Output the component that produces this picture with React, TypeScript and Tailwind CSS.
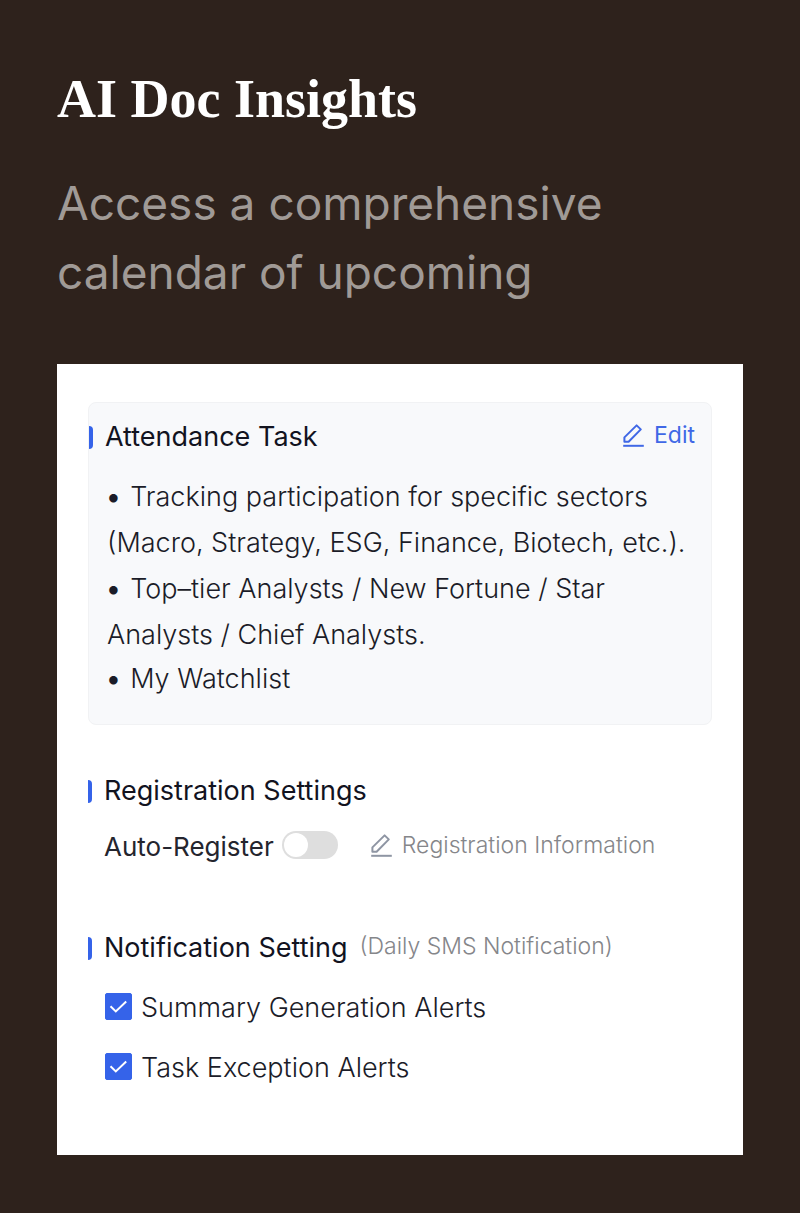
import { useId, useState } from "react";
import type { ReactNode } from "react";

function PenIcon({ className }: { className: string }) {
  return (
    <svg viewBox="0 0 24 24" className={className} fill="none" stroke="currentColor" strokeWidth="2" aria-hidden="true">
      <path d="M2.4 18.8v-4.4L14.6 2.4l4.2 4L6.6 18.8z" strokeLinejoin="round" />
      <path d="M1.2 22.8h20.6" />
    </svg>
  );
}

function SectionTitle({ children }: { children: ReactNode }) {
  return (
    <h2 className="flex items-center gap-3 text-[27px] leading-8 font-normal text-[#12131f]">
      <span className="h-[23px] w-1 rounded-r-sm bg-[#3563e9]" />
      {children}
    </h2>
  );
}

function Bullet() {
  return <span className="mr-1 font-bold">• </span>;
}

function CheckRow({ label }: { label: string }) {
  const id = useId();
  const [on, setOn] = useState(true);
  return (
    <div className="flex items-start gap-[9px]">
      <span className="grid pt-px">
        <input
          id={id}
          type="checkbox"
          checked={on}
          onChange={() => setOn(!on)}
          className="col-start-1 row-start-1 size-[27px] appearance-none rounded-xs border border-[#3563e9] bg-white checked:bg-[#3563e9]"
        />
        <svg viewBox="0 0 27 27" className="pointer-events-none col-start-1 row-start-1 size-[27px]" fill="none" stroke="#fff" strokeWidth="2" aria-hidden="true">
          <path d="M5.5 13.2l5.3 5.2L21.2 8.6" />
        </svg>
      </span>
      <label htmlFor={id} className="text-[27px] leading-8 font-light text-[#1b1c28]">{label}</label>
    </div>
  );
}

export default function App() {
  const toggleId = useId();
  const [auto, setAuto] = useState(false);
  return (
    <main className="min-h-screen bg-[#2e221c] px-[57px] pt-[66px] pb-[58px] font-['Inter',sans-serif]">
      <h1 className="font-['Liberation_Serif',serif] text-[54px] leading-[66px] font-bold text-white">AI Doc Insights</h1>
      <p className="mt-[37px] text-[46px] leading-[69px] text-[#a09a96]">
        Access a comprehensive
        <br />
        calendar of upcoming
      </p>

      <div className="mt-[57px] bg-white px-[31px] pt-[38px] pb-[71px]">
        <section className="rounded-lg border border-[#f1f2f4] bg-[#f8f9fb] pt-[18px] pb-6">
          <div className="flex items-start justify-between pr-4">
            <SectionTitle>Attendance Task</SectionTitle>
            <button type="button" className="flex items-center gap-2 text-[23px] leading-7 text-[#4068e6]">
              <PenIcon className="size-6" />
              Edit
            </button>
          </div>
          <div className="mt-[21px] px-[18px] text-[27px] leading-[46px] font-light text-[#1b1c28]">
            <p>
              <Bullet />
              Tracking participation for specific sectors
              <br />
              (Macro, Strategy, ESG, Finance, Biotech, etc.).
            </p>
            <p>
              <Bullet />
              Top–tier Analysts / New Fortune / Star
              <br />
              Analysts / Chief Analysts.
            </p>
            <p className="leading-[42px]">
              <Bullet />
              My Watchlist
            </p>
          </div>
        </section>

        <section className="mt-[50px]">
          <SectionTitle>Registration Settings</SectionTitle>
          <div className="mt-6 flex items-start pl-4">
            <label htmlFor={toggleId} className="text-[26px] leading-8 text-[#24252e]">Auto-Register</label>
            <input
              id={toggleId}
              type="checkbox"
              role="switch"
              checked={auto}
              onChange={() => setAuto(!auto)}
              className="ml-2 flex h-7 w-14 appearance-none items-center rounded-full bg-[#dedede] px-0.5 before:size-6 before:rounded-full before:bg-white checked:justify-end checked:bg-[#3563e9]"
            />
            <button type="button" className="ml-8 flex items-center gap-2 text-[23px] leading-7 font-light text-[#85868a]">
              <PenIcon className="size-6 text-[#8e95a3]" />
              Registration Information
            </button>
          </div>
        </section>

        <section className="mt-[69px]">
          <div className="flex items-start gap-3">
            <SectionTitle>Notification Setting</SectionTitle>
            <span className="text-[23px] leading-7 font-light text-[#85868a]">(Daily SMS Notification)</span>
          </div>
          <div className="mt-7 flex flex-col gap-7 pl-[17px]">
            <CheckRow label="Summary Generation Alerts" />
            <CheckRow label="Task Exception Alerts" />
          </div>
        </section>
      </div>
    </main>
  );
}
